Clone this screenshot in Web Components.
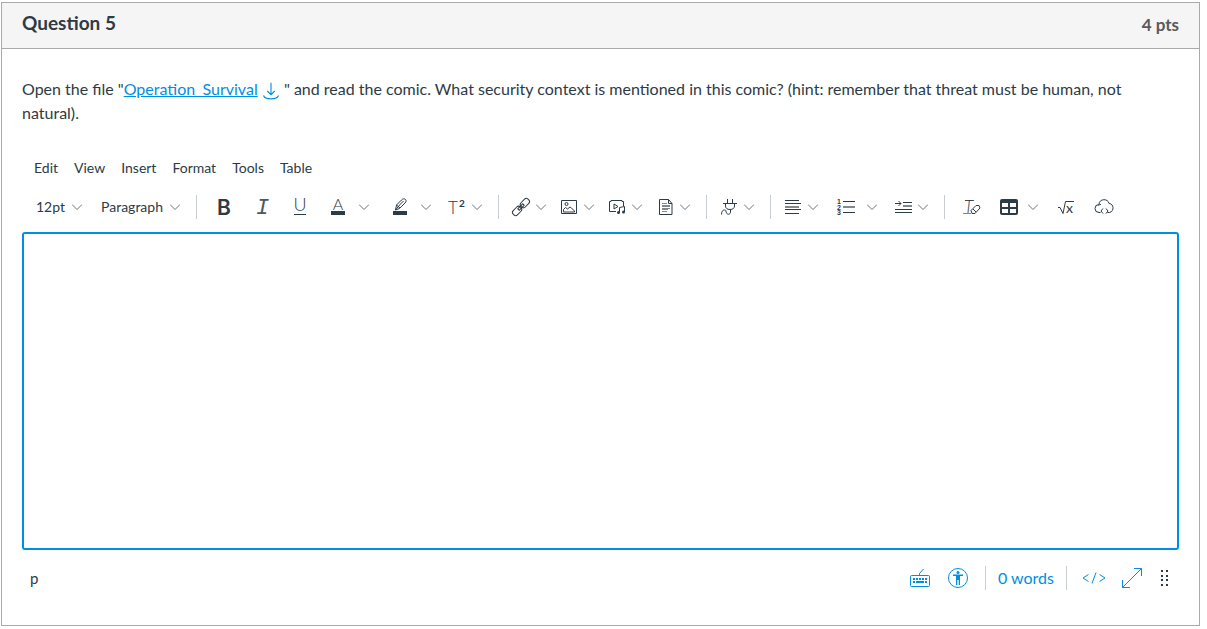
<!DOCTYPE html>
<html lang="en">
<head>
<meta charset="utf-8">
<meta name="viewport" content="width=device-width, initial-scale=1">
<title>Question 5</title>
<style>
    body {
        margin: 2px 7px 2px 1px;
        background: #fff;
        color: #2d3b45;
        font: 16px/24px Lato, "Liberation Sans", sans-serif;
    }
</style>
</head>
<body>

<quiz-question>
    <span slot="title">Question 5</span>
    <span slot="points">4 pts</span>
    <span>Open the file "<file-link href="#operation-survival">Operation_Survival</file-link> " and read the comic. What security context is mentioned in this comic? (hint: remember that threat must be human, not natural).</span>
    <rich-editor slot="answer"></rich-editor>
</quiz-question>

<script>
const icons = {
    bold: '<text x="5" y="20" font-family="Inter" font-weight="600" font-size="21">B</text>',
    italic: '<text x="6" y="19" font-family="Liberation Mono" font-style="italic" font-size="22" opacity=".85">I</text>',
    underline: '<text x="12" y="16" text-anchor="middle" font-family="Lato" font-weight="300" font-size="18">U</text><path class="line" d="M6 19.500h12"/>',
    color: '<text x="12" y="15" text-anchor="middle" font-family="Lato" font-weight="300" font-size="16">A</text><path d="M5 16h14v4H5z"/>',
    highlight: '<path d="M5 16h14v4H5z"/><path class="line" d="M7.500 15l1-5 5-5c1.500-1.500 3-1.500 4-.5s.8 2-.5 3.500L11.500 13.500zM8.500 10l3.500 3M7.500 15l5-6 3-3"/>',
    superscript: '<text x="3" y="19" font-family="Lato" font-weight="300" font-size="17">T</text><text x="14" y="12" font-family="Lato" font-weight="700" font-size="10">2</text>',
    link: '<g class="line" transform="rotate(-45 12 12)"><rect x="1.500" y="9" width="10" height="6" rx="2.500"/><rect x="12.500" y="9" width="10" height="6" rx="2.500"/><path d="M8.500 11h7v2h-7z"/></g>',
    image: '<path class="line" d="M4.500 5.500h15v13h-15zM6.500 16.500v-2l2-2 2 1.500 2.500-2 1.500 1 3 3v1h-11z"/><circle class="line" cx="9.500" cy="9" r="1.500"/>',
    media: '<path class="line" d="M11 16.500H4.500v-10H6v-1h11v1h1.500V11M9 9v5l4-2.500zM14.500 17.500v-5l5-1V17"/><circle cx="13.500" cy="17.500" r="1.500"/><circle cx="18.500" cy="17" r="1.500"/>',
    document: '<path class="line" d="M6.500 4.500h9l3.500 4v11H6.500zM15.500 4.500v4H19"/><path class="line soft" d="M9 8.500h5M9 10.500h8M9 11.500h8M9 13.500h8M9 14.500h6M9 16.500h5"/>',
    plug: '<path class="line" d="M10.500 4v4M15.500 4v4M6 8.500h14M8.500 8.500V11c0 2 1.500 3.500 4.500 3.500s4.500-1.500 4.500-3.500V8.500M13.500 14.500V17c0 2.500-3 3-4 1s0-3-2-3-3 1.500-3 4.500"/>',
    align: '<path class="line" d="M4 5.500h14M4 8.500h16M4 14.500h16M4 18.500h14"/><path class="line soft" d="M4 11.500h14M4 12.500h14"/>',
    list: '<path class="line" d="M9 6.500h12M9 17.500h12"/><path class="line soft" d="M9 11.500h12M9 12.500h12"/><g font-family="Liberation Sans" font-size="7" font-weight="700"><text x="3" y="9">1</text><text x="3" y="15">2</text><text x="3" y="20">3</text></g>',
    indent: '<path class="line" d="M12 7.500h9M4 14.500h17M4 17.500h17M4 8.500h6M7.500 6l2.500 2.500L7.500 11"/><path class="line soft" d="M12 10.500h9M12 11.500h9"/>',
    clear: '<text x="4" y="18" font-family="Lato" font-style="italic" font-weight="300" font-size="17">T</text><path class="line soft" d="M3 18.500h8M5 5.500h9"/><path class="line" d="M12 18.500l-1-3 5-5h3l1 2.500-5 5.500zM13 14l3 3"/>',
    table: '<path fill-rule="evenodd" d="M5 4h14a2 2 0 0 1 2 2v12a2 2 0 0 1-2 2H5a2 2 0 0 1-2-2V6a2 2 0 0 1 2-2zM5 8v4h6V8zM13 8v4h6V8zM5 14v4h6v-4zM13 14v4h6v-4z"/>',
    math: '<path class="line" d="M4 12.500h2l3 6 2.500-12H20"/><text x="12" y="18" font-family="Lato" font-size="14">x</text>',
    cloud: '<path class="line" d="M8.500 17.500H7a4 4 0 0 1 0-8c0-6 9-6.500 10-1 5 0 5.500 8 .5 9h-2M9 9.500c-1.500 0-2 .5-2.500 1M11 13.500l-2 2.500 2 2.500M14 13.500l2 2.500-2 2.500"/>',
    keyboard: '<path class="line" d="M3.500 9.500h17a1 1 0 0 1 1 1v9a1 1 0 0 1-1 1h-17a1 1 0 0 1-1-1v-9a1 1 0 0 1 1-1zM11.500 9.500V7.500l4-4.500"/><path d="M5 12h2v2H5zM8 12h2v2H8zM11 12h2v2h-2zM14 12h2v2h-2zM17 12h2v2h-2zM5 15h2v2H5zM8 15h8v2H8zM17 15h2v2h-2z"/>',
    access: '<circle class="line" cx="12" cy="12" r="9.500"/><circle cx="12" cy="6.500" r="1.500"/><path d="M7 8.500h10v1.500h-3V19h-1.300v-5h-1.400v5H10v-9H7z"/>',
    code: '<path class="line" d="M6.500 8.500L1 12l5.500 3.500M17.500 8.500L23 12l-5.500 3.500M14 6.500l-4 11"/>',
    expand: '<path class="line" d="M2.500 21.500l19-19M14 2.500h7.500V10M2.500 14v7.500H10"/>',
    drag: '<path d="M8 4h2v2H8zM13 4h2v2h-2zM8 9h2v2H8zM13 9h2v2h-2zM8 13h2v2H8zM13 13h2v2h-2zM8 18h2v2H8zM13 18h2v2h-2z"/>',
    download: '<path class="line" stroke-width="1.500" d="M12 1v16M7 12l5 5 5-5M2 18c2 6 18 6 20 0"/>'
};

class EditorIcon extends HTMLElement {
    connectedCallback() {
        if (this.shadowRoot) return;
        this.attachShadow({ mode: 'open' }).innerHTML = `
            <style>
                :host { display: block; width: 24px; height: 24px; flex: none; }
                svg { display: block; width: 100%; height: 100%; overflow: visible; fill: currentColor; }
                .line { fill: none; stroke: currentColor; }
                .soft { opacity: .6; }
            </style>
            <svg viewBox="0 0 24 24" aria-hidden="true">${icons[this.getAttribute('name')]}</svg>
        `;
    }
}
customElements.define('editor-icon', EditorIcon);

const linkTemplate = document.createElement('template');
linkTemplate.innerHTML = `<style>
        :host { color: #008ee2; }
        a { color: inherit; text-decoration: underline; }
        .download { display: inline-block; vertical-align: middle; }
        editor-icon { width: 18px; height: 18px; }
    </style><a class="file"><slot></slot></a>
    <a class="download" aria-label="Download file"><editor-icon name="download"></editor-icon></a>`;

customElements.define('file-link', class extends HTMLElement {
    constructor() {
        super();
        const root = this.attachShadow({ mode: 'open' });
        root.appendChild(linkTemplate.content.cloneNode(true));
        root.querySelectorAll('a').forEach(a => a.href = this.getAttribute('href') || '#');
    }
});

// kind: plain (default), split, menu, wide or text
customElements.define('tool-button', class extends HTMLElement {
    connectedCallback() {
        if (this.shadowRoot) return;
        const kind = this.getAttribute('kind') || 'plain';
        const icon = this.getAttribute('icon');
        const label = this.getAttribute('label');
        const face = icon ? `<editor-icon name="${icon}"></editor-icon>` : '<slot></slot>';
        const chevron = '<svg class="chevron" viewBox="0 0 10 6" aria-hidden="true"><path d="M0 .5l5 5 5-5"/></svg>';
        this.attachShadow({ mode: 'open' }).innerHTML = `
            <style>
                :host { display: flex; }
                button {
                    display: flex;
                    align-items: center;
                    height: 34px;
                    margin: 0;
                    padding: 0;
                    border: 0;
                    border-radius: 3px;
                    background: none;
                    color: inherit;
                    font: inherit;
                    cursor: pointer;
                }
                button:hover { background: #f0f2f4; }
                .plain, .face { width: 34px; justify-content: center; }
                .more { width: 24px; padding-left: 4px; }
                .menu { gap: 3px; padding-right: 7px; }
                .wide { gap: 7px; padding: 0 7px 0 4px; }
                .text { gap: 7px; padding: 0 7px 0 8px; }
                .chevron { width: 10px; height: 6px; flex: none; fill: none; stroke: #6b757c; }
            </style>
            ${kind === 'split'
                ? `<button class="face" aria-label="${label}">${face}</button><button class="more" aria-label="${label} options">${chevron}</button>`
                : `<button class="${kind}" aria-label="${label}">${face}${kind === 'plain' ? '' : chevron}</button>`}
        `;
    }
});

customElements.define('tool-group', class extends HTMLElement {
    constructor() {
        super();
        this.attachShadow({ mode: 'open' }).innerHTML = `
            <style>
                :host { display: flex; align-items: center; gap: 4px; }
                :host(:not(:last-of-type))::after {
                    content: "";
                    width: 1px;
                    height: 24px;
                    margin: 0 10px 0 5px;
                    background: #c7cdd1;
                }
            </style>
            <slot></slot>
        `;
    }
});

customElements.define('editor-menubar', class extends HTMLElement {
    constructor() {
        super();
        const items = ['Edit', 'View', 'Insert', 'Format', 'Tools', 'Table'];
        this.attachShadow({ mode: 'open' }).innerHTML = `
            <style>
                :host { display: flex; padding: 0 4px; }
                button {
                    height: 28px;
                    padding: 0 8px;
                    border: 0;
                    background: none;
                    color: inherit;
                    font: inherit;
                    font-size: 14px;
                }
            </style>
            ${items.map(item => `<button>${item}</button>`).join('')}
        `;
    }
});

customElements.define('editor-toolbar', class extends HTMLElement {
    constructor() {
        super();
        this.attachShadow({ mode: 'open' }).innerHTML = `
            <style>
                :host {
                    display: flex;
                    flex-wrap: wrap;
                    padding: 8px 6px;
                    font-size: 14px;
                }
            </style>
            <tool-group>
                <tool-button kind="text" label="Font size 12pt">12pt</tool-button>
                <tool-button kind="text" label="Block Paragraph">Paragraph</tool-button>
            </tool-group>
            <tool-group>
                <tool-button icon="bold" label="Bold"></tool-button>
                <tool-button icon="italic" label="Italic"></tool-button>
                <tool-button icon="underline" label="Underline"></tool-button>
                <tool-button kind="split" icon="color" label="Text color"></tool-button>
                <tool-button kind="split" icon="highlight" label="Background color"></tool-button>
                <tool-button kind="menu" icon="superscript" label="Superscript"></tool-button>
            </tool-group>
            <tool-group>
                <tool-button kind="menu" icon="link" label="Links"></tool-button>
                <tool-button kind="menu" icon="image" label="Images"></tool-button>
                <tool-button kind="menu" icon="media" label="Media"></tool-button>
                <tool-button kind="menu" icon="document" label="Documents"></tool-button>
            </tool-group>
            <tool-group>
                <tool-button kind="menu" icon="plug" label="Apps"></tool-button>
            </tool-group>
            <tool-group>
                <tool-button kind="menu" icon="align" label="Align"></tool-button>
                <tool-button kind="split" icon="list" label="Ordered list"></tool-button>
                <tool-button kind="menu" icon="indent" label="Indent"></tool-button>
            </tool-group>
            <tool-group>
                <tool-button icon="clear" label="Clear formatting"></tool-button>
                <tool-button kind="wide" icon="table" label="Table"></tool-button>
                <tool-button icon="math" label="Equation"></tool-button>
                <tool-button icon="cloud" label="Embed"></tool-button>
            </tool-group>
        `;
    }
});

customElements.define('editor-status', class extends HTMLElement {
    constructor() {
        super();
        this.attachShadow({ mode: 'open' }).innerHTML = `
            <style>
                :host { display: flex; align-items: center; height: 56px; }
                .path { flex: 1; padding-left: 8px; font-size: 15px; }
                button {
                    display: flex;
                    justify-content: center;
                    width: 38px;
                    padding: 0;
                    border: 0;
                    background: none;
                    color: #008ee2;
                    font: inherit;
                    cursor: pointer;
                }
                .words { width: auto; padding: 0 12px; }
                .drag { width: 28px; color: #2d3b45; }
                .rule { width: 1px; height: 24px; background: #c7cdd1; }
                .rule.before { margin-left: 8px; }
                .rule.after { margin-right: 8px; }
            </style>
            <span class="path">p</span>
            <button aria-label="Keyboard shortcuts"><editor-icon name="keyboard"></editor-icon></button>
            <button aria-label="Accessibility checker"><editor-icon name="access"></editor-icon></button>
            <span class="rule before"></span>
            <button class="words">0 words</button>
            <span class="rule after"></span>
            <button aria-label="HTML editor"><editor-icon name="code"></editor-icon></button>
            <button aria-label="Fullscreen"><editor-icon name="expand"></editor-icon></button>
            <button class="drag" aria-label="Resize"><editor-icon name="drag"></editor-icon></button>
        `;
    }
});

customElements.define('rich-editor', class extends HTMLElement {
    constructor() {
        super();
        this.attachShadow({ mode: 'open' }).innerHTML = `
            <style>
                :host { display: block; }
                textarea {
                    display: block;
                    box-sizing: border-box;
                    width: 100%;
                    height: 318px;
                    padding: 12px;
                    border: 2px solid #008ee2;
                    border-radius: 3px;
                    outline: 0;
                    resize: none;
                    color: inherit;
                    font: inherit;
                }
            </style>
            <editor-menubar></editor-menubar>
            <editor-toolbar></editor-toolbar>
            <textarea aria-label="Rich content editor"></textarea>
            <editor-status></editor-status>
        `;
    }
});

customElements.define('quiz-question', class extends HTMLElement {
    constructor() {
        super();
        this.attachShadow({ mode: 'open' }).innerHTML = `
            <style>
                :host { display: block; border: 1px solid #aaa; }
                header {
                    display: flex;
                    align-items: center;
                    justify-content: space-between;
                    height: 45px;
                    padding: 0 20px;
                    border-bottom: 1px solid #aaa;
                    background: #f5f5f5;
                }
                h2 { margin: 0 0 5px; font-size: 19px; font-weight: 700; }
                .points { margin-bottom: 2px; color: #595959; font-size: 17px; font-weight: 700; }
                .body { padding: 28px 20px 19px; }
                .text { margin-bottom: 29px; }
            </style>
            <header>
                <h2><slot name="title"></slot></h2>
                <div class="points"><slot name="points"></slot></div>
            </header>
            <div class="body">
                <div class="text"><slot></slot></div>
                <slot name="answer"></slot>
            </div>
        `;
    }
});
</script>
</body>
</html>
